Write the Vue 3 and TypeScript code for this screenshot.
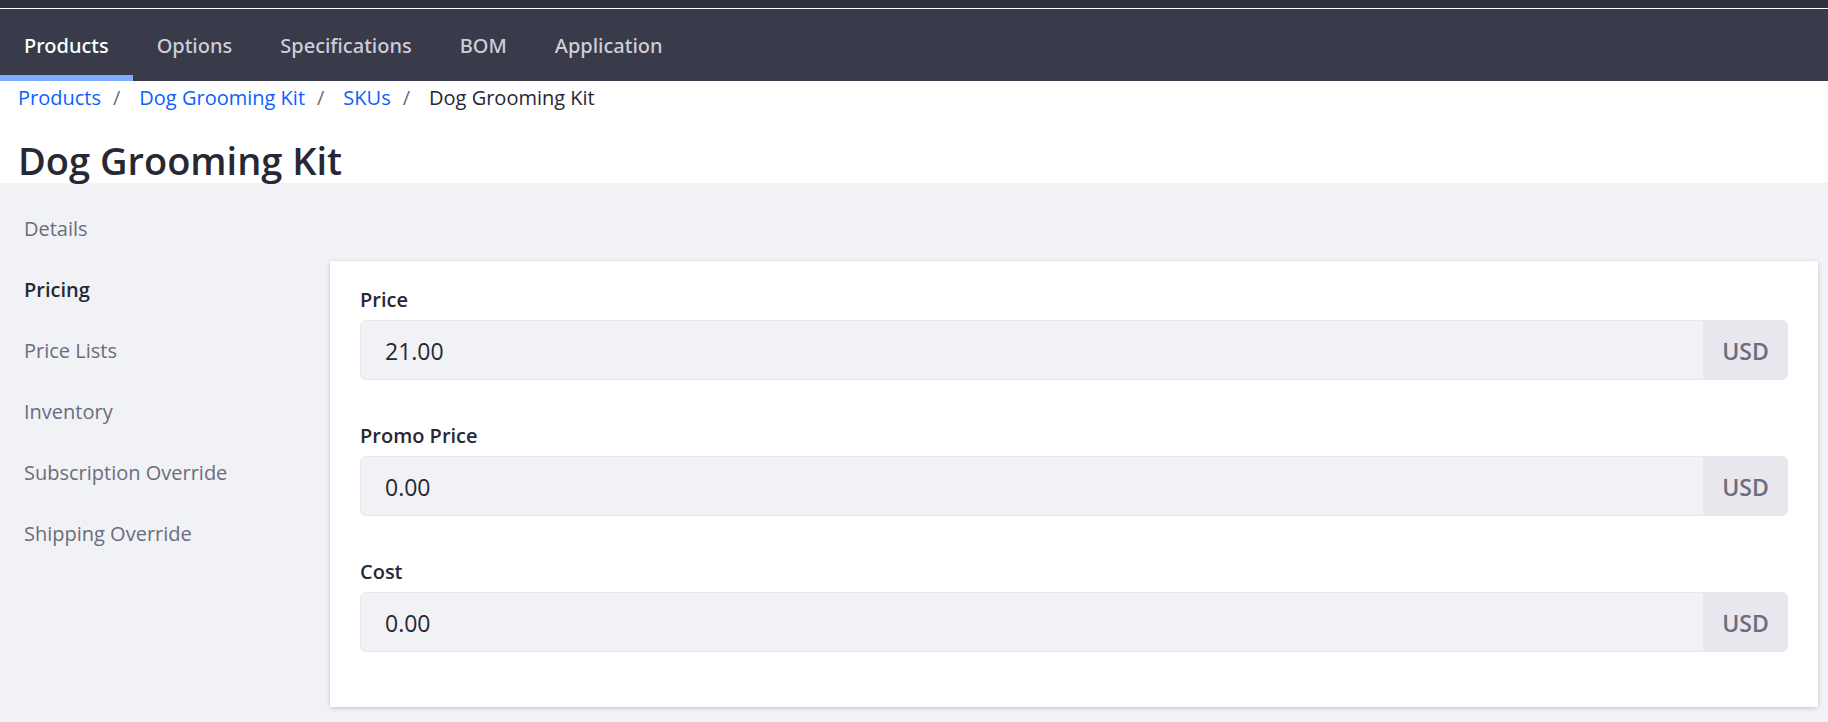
<script setup lang="ts">
import { ref } from 'vue'

interface PriceField {
  id: string
  label: string
  value: string
}

const tabs: string[] = ['Products', 'Options', 'Specifications', 'BOM', 'Application']
const crumbs: string[] = ['Products', 'Dog Grooming Kit', 'SKUs']
const sections: string[] = [
  'Details',
  'Pricing',
  'Price Lists',
  'Inventory',
  'Subscription Override',
  'Shipping Override',
]
const activeTab = ref('Products')
const activeSection = ref('Pricing')
const fields = ref<PriceField[]>([
  { id: 'price', label: 'Price', value: '21.00' },
  { id: 'promo-price', label: 'Promo Price', value: '0.00' },
  { id: 'cost', label: 'Cost', value: '0.00' },
])
</script>

<template>
  <div class="page">
    <div class="control-bar"></div>
    <nav class="tabs" aria-label="Catalog">
      <a
        v-for="tab in tabs"
        :key="tab"
        href="#"
        class="tab"
        :class="{ active: tab === activeTab }"
        @click.prevent="activeTab = tab"
      >{{ tab }}</a>
    </nav>

    <header class="heading">
      <nav aria-label="Breadcrumb">
        <ol class="breadcrumb">
          <li v-for="crumb in crumbs" :key="crumb" class="crumb">
            <a href="#" @click.prevent>{{ crumb }}</a>
            <span class="slash">/</span>
          </li>
          <li class="crumb" aria-current="page">Dog Grooming Kit</li>
        </ol>
      </nav>
      <h1 class="title">Dog Grooming Kit</h1>
    </header>

    <main class="body">
      <nav class="sections" aria-label="SKU sections">
        <a
          v-for="section in sections"
          :key="section"
          href="#"
          class="section"
          :class="{ active: section === activeSection }"
          @click.prevent="activeSection = section"
        >{{ section }}</a>
      </nav>

      <form class="sheet" @submit.prevent>
        <div v-for="field in fields" :key="field.id" class="field">
          <label class="label" :for="field.id">{{ field.label }}</label>
          <div class="group">
            <input :id="field.id" v-model="field.value" class="input" type="text" />
            <span class="addon">USD</span>
          </div>
        </div>
      </form>
    </main>
  </div>
</template>

<style>
body {
  margin: 0;
  background: #f1f2f5;
}
</style>

<style scoped>
.page {
  min-height: 100vh;
  display: flex;
  flex-direction: column;
  color: #272833;
  background: #f1f2f5;
  font-family: 'Segoe UI', 'Open Sans', 'Noto Sans', sans-serif;
  font-size: 20px;
  line-height: 28px;
}

a {
  color: inherit;
  text-decoration: none;
}

.control-bar {
  height: 8px;
  background: #30313f;
  border-bottom: 1px solid #fff;
}

.tabs {
  display: flex;
  background: #393a4a;
  font-family: 'Segoe UI', 'Noto Sans', 'Open Sans', sans-serif;
}

.tab {
  padding: 23px 24px 15px;
  border-bottom: 6px solid transparent;
  color: #cdced9;
  font-weight: 500;
}

.tab.active {
  color: #fff;
  border-bottom-color: #80acff;
}

.heading {
  height: 102px;
  padding: 0 18px;
  box-sizing: border-box;
  background: #fff;
}

.breadcrumb {
  display: flex;
  margin: 0;
  padding: 3px 0 0;
  list-style: none;
}

.crumb a {
  color: #0b5fff;
}

.slash {
  margin: 0 19px 0 12px;
  color: #6b6c7e;
}

.title {
  margin: 20px 0 0;
  font-size: 38px;
  line-height: 56px;
  font-weight: 600;
}

.body {
  flex: 1;
  display: flex;
  align-items: flex-start;
  padding: 0 10px 15px 0;
}

.sections {
  flex: 0 0 330px;
  display: flex;
  flex-direction: column;
  gap: 33px;
  padding: 32px 24px 0;
  box-sizing: border-box;
}

.section {
  color: #6b6c7e;
}

.section.active {
  color: #272833;
  font-weight: 600;
}

.sheet {
  flex: 1;
  min-width: 0;
  display: flex;
  flex-direction: column;
  gap: 42px;
  margin-top: 78px;
  padding: 25px 30px 55px;
  background: #fff;
  box-shadow: 0 1px 5px -1px rgba(0, 0, 0, 0.3);
}

.label {
  display: block;
  margin-bottom: 6px;
  font-weight: 600;
}

.group {
  display: flex;
  height: 60px;
}

.input {
  flex: 1;
  min-width: 0;
  padding: 2px 24px 0;
  border: 1px solid #e7e7ed;
  border-right: 0;
  border-radius: 6px 0 0 6px;
  background: #f1f2f5;
  color: #272833;
  font: inherit;
  font-size: 23px;
}

.addon {
  flex: 0 0 85px;
  display: flex;
  align-items: center;
  justify-content: center;
  padding-top: 2px;
  box-sizing: border-box;
  border-radius: 0 6px 6px 0;
  background: #e7e7ed;
  color: #6b6c7e;
  font-size: 23px;
  font-weight: 600;
}
</style>
